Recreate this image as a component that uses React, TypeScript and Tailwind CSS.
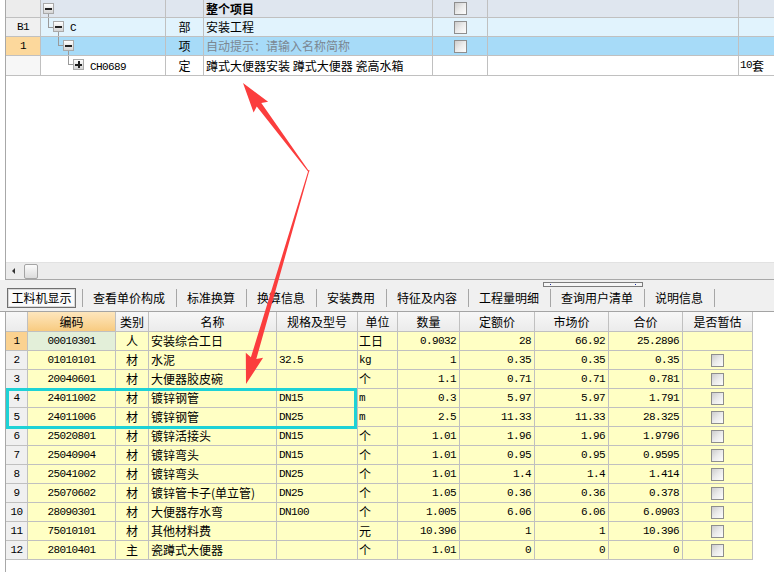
import React from "react";

const mono = "font-['Liberation_Mono','Noto_Sans_CJK_SC',monospace] text-[11px] tracking-[-0.6px]";
const cjk = "font-['Noto_Sans_CJK_SC',sans-serif] text-[12px]";
const cell = "border-r border-b border-[#c0c0c0] flex items-center overflow-hidden whitespace-nowrap";

function Check() {
  return (
    <span className="block w-[13px] h-[13px] border border-[#8e8e8e] bg-linear-to-br from-[#cdcdcd] via-[#ebebeb] to-[#fdfdfd]" />
  );
}

function Toggle({ plus }: { plus?: boolean }) {
  return (
    <span className="relative block w-[11px] h-[11px] border border-[#a9a9a9] bg-linear-to-b from-white to-[#d4d4d4]">
      <span className="absolute left-[1px] top-[3.5px] w-[7px] h-[2px] bg-[#222]" />
      {plus && <span className="absolute left-[3.5px] top-[1px] w-[2px] h-[7px] bg-[#222]" />}
    </span>
  );
}

type Row = {
  code: string;
  kind: string;
  name: string;
  spec: string;
  unit: string;
  qty: string;
  quota: string;
  market: string;
  total: string;
  check: boolean;
};

const rows: Row[] = [
  { code: "00010301", kind: "人", name: "安装综合工日", spec: "", unit: "工日", qty: "0.9032", quota: "28", market: "66.92", total: "25.2896", check: false },
  { code: "01010101", kind: "材", name: "水泥", spec: "32.5", unit: "kg", qty: "1", quota: "0.35", market: "0.35", total: "0.35", check: true },
  { code: "20040601", kind: "材", name: "大便器胶皮碗", spec: "", unit: "个", qty: "1.1", quota: "0.71", market: "0.71", total: "0.781", check: true },
  { code: "24011002", kind: "材", name: "镀锌钢管", spec: "DN15", unit: "m", qty: "0.3", quota: "5.97", market: "5.97", total: "1.791", check: true },
  { code: "24011006", kind: "材", name: "镀锌钢管", spec: "DN25", unit: "m", qty: "2.5", quota: "11.33", market: "11.33", total: "28.325", check: true },
  { code: "25020801", kind: "材", name: "镀锌活接头", spec: "DN15", unit: "个", qty: "1.01", quota: "1.96", market: "1.96", total: "1.9796", check: true },
  { code: "25040904", kind: "材", name: "镀锌弯头", spec: "DN15", unit: "个", qty: "1.01", quota: "0.95", market: "0.95", total: "0.9595", check: true },
  { code: "25041002", kind: "材", name: "镀锌弯头", spec: "DN25", unit: "个", qty: "1.01", quota: "1.4", market: "1.4", total: "1.414", check: true },
  { code: "25070602", kind: "材", name: "镀锌管卡子(单立管)", spec: "DN25", unit: "个", qty: "1.05", quota: "0.36", market: "0.36", total: "0.378", check: true },
  { code: "28090301", kind: "材", name: "大便器存水弯", spec: "DN100", unit: "个", qty: "1.005", quota: "6.06", market: "6.06", total: "6.0903", check: true },
  { code: "75010101", kind: "材", name: "其他材料费", spec: "", unit: "元", qty: "10.396", quota: "1", market: "1", total: "10.396", check: true },
  { code: "28010401", kind: "主", name: "瓷蹲式大便器", spec: "", unit: "个", qty: "1.01", quota: "0", market: "0", total: "0", check: true },
];

const tabs = ["查看单价构成", "标准换算", "换算信息", "安装费用", "特征及内容", "工程量明细", "查询用户清单", "说明信息"];
const headers = ["", "编码", "类别", "名称", "规格及型号", "单位", "数量", "定额价", "市场价", "合价", "是否暂估"];

function arrowPoints(sx: number, sy: number, tx: number, ty: number) {
  const dx = tx - sx;
  const dy = ty - sy;
  const len = Math.hypot(dx, dy);
  const ux = dx / len;
  const uy = dy / len;
  const nx = -uy;
  const ny = ux;
  const L = 27;
  const H = 9;
  const w0 = 0.5;
  const w1 = 2.8;
  const bx = tx - ux * L;
  const by = ty - uy * L;
  const pts = [
    [sx + nx * w0, sy + ny * w0],
    [bx + nx * w1, by + ny * w1],
    [bx + nx * H - ux * 3, by + ny * H - uy * 3],
    [tx, ty],
    [bx - nx * H - ux * 3, by - ny * H - uy * 3],
    [bx - nx * w1, by - ny * w1],
    [sx - nx * w0, sy - ny * w0],
  ];
  return pts.map((p) => p.map((v) => v.toFixed(1)).join(",")).join(" ");
}

export default function App() {
  return (
    <div className={`relative w-[774px] h-[572px] overflow-hidden bg-white text-black ${cjk}`}>
      {/* upper tree grid */}
      <div className="ml-[5px] h-[280px] flex flex-col border-l border-b border-l-[#a8a8a8] border-b-[#a8a8a8]">
        <div className="grid grid-cols-[35px_125px_38px_229px_55px_251px_1fr]">
          {/* row 0 */}
          <div className={`${cell} h-[18px] bg-[#ececec]`} />
          <div className={`${cell} h-[18px] bg-[#dfe6ef] relative`}>
            <span className="absolute left-[2px] top-[3px]"><Toggle /></span>
            <span className="absolute left-[7px] top-[14px] w-[1px] h-[4px] bg-[#9a9a9a]" />
          </div>
          <div className={`${cell} h-[18px] bg-[#dfe6ef]`} />
          <div className={`${cell} h-[18px] bg-[#dfe6ef] pl-[2px] font-bold`}>整个项目</div>
          <div className={`${cell} h-[18px] bg-[#dfe6ef] justify-center`}><Check /></div>
          <div className={`${cell} h-[18px] bg-[#dfe6ef]`} />
          <div className={`${cell} h-[18px] bg-[#dfe6ef] border-r-0`} />

          {/* row B1 */}
          <div className={`${cell} h-[19px] bg-[#f0f0f0] justify-center ${mono}`}>B1</div>
          <div className={`${cell} h-[19px] bg-[#e1f3fd] relative`}>
            <span className="absolute left-[7px] top-0 w-[1px] h-[9px] bg-[#9a9a9a]" />
            <span className="absolute left-[7px] top-[9px] w-[5px] h-[1px] bg-[#9a9a9a]" />
            <span className="absolute left-[12px] top-[3px]"><Toggle /></span>
            <span className="absolute left-[17px] top-[14px] w-[1px] h-[5px] bg-[#9a9a9a]" />
            <span className={`absolute left-[29px] top-[2px] ${mono}`}>C</span>
          </div>
          <div className={`${cell} h-[19px] bg-[#e1f3fd] justify-center`}>部</div>
          <div className={`${cell} h-[19px] bg-[#e1f3fd] pl-[2px]`}>安装工程</div>
          <div className={`${cell} h-[19px] bg-[#e1f3fd] justify-center`}><Check /></div>
          <div className={`${cell} h-[19px] bg-[#e1f3fd]`} />
          <div className={`${cell} h-[19px] bg-[#e1f3fd] border-r-0`} />

          {/* row 1 */}
          <div className={`${cell} h-[19px] bg-[#fcd89c] justify-center ${mono}`}>1</div>
          <div className={`${cell} h-[19px] bg-[#a7dbf8] relative`}>
            <span className="absolute left-[17px] top-0 w-[1px] h-[8px] bg-[#9a9a9a]" />
            <span className="absolute left-[17px] top-[8px] w-[5px] h-[1px] bg-[#9a9a9a]" />
            <span className="absolute left-[22px] top-[3px]"><Toggle /></span>
            <span className="absolute left-[27px] top-[14px] w-[1px] h-[5px] bg-[#9a9a9a]" />
          </div>
          <div className={`${cell} h-[19px] bg-[#a7dbf8] justify-center`}>项</div>
          <div className={`${cell} h-[19px] bg-[#a7dbf8] pl-[2px] text-[#7b8792]`}>自动提示：请输入名称简称</div>
          <div className={`${cell} h-[19px] bg-[#a7dbf8] justify-center`}><Check /></div>
          <div className={`${cell} h-[19px] bg-[#a7dbf8]`} />
          <div className={`${cell} h-[19px] bg-[#a7dbf8] border-r-0`} />

          {/* row CH0689 */}
          <div className={`${cell} h-[20px] bg-[#f7f7f7]`} />
          <div className={`${cell} h-[20px] bg-white relative`}>
            <span className="absolute left-[27px] top-0 w-[1px] h-[8px] bg-[#9a9a9a]" />
            <span className="absolute left-[27px] top-[8px] w-[5px] h-[1px] bg-[#9a9a9a]" />
            <span className="absolute left-[32px] top-[3px]"><Toggle plus /></span>
            <span className={`absolute left-[49px] top-[3px] ${mono}`}>CH0689</span>
          </div>
          <div className={`${cell} h-[20px] justify-center`}>定</div>
          <div className={`${cell} h-[20px] pl-[2px]`}>蹲式大便器安装 蹲式大便器 瓷高水箱</div>
          <div className={`${cell} h-[20px]`} />
          <div className={`${cell} h-[20px]`} />
          <div className={`${cell} h-[20px] border-r-0 pl-[1px]`}>
            <span className={mono}>10</span>套
          </div>
        </div>

        <div className="flex-1 bg-white" />

        {/* scrollbar */}
        <div className="h-[17px] bg-[#ececec] border-t border-[#e2e2e2] flex items-center">
          <span className="ml-[6px] w-0 h-0 border-y-[3px] border-y-transparent border-r-[3px] border-r-[#333]" />
          <span className="ml-[9px] w-[14px] h-[15px] rounded-[2px] border border-[#a4a4a4] bg-linear-to-b from-[#fbfbfb] to-[#dcdcdc]" />
        </div>
      </div>

      {/* tab strip */}
      <div className="relative h-[31px] bg-[#f0f0f0]">
        <div className="absolute left-[543px] top-[2px] w-[100px] h-[5px] border border-[#7c7c7c] bg-[#f6f6f6]">
          <span className="absolute left-[6px] top-[1px] w-[1px] h-[1px] bg-[#2030a0]" />
          <span className="absolute left-[91px] top-[1px] w-[1px] h-[1px] bg-[#2030a0]" />
        </div>
        <div className="flex items-center pt-[8px]">
          <div className="ml-[7px] w-[69px] h-[20px] border border-[#707070] bg-[#fbfbfb] flex items-center justify-center outline outline-1 -outline-offset-2 outline-[#d8d8d8]">
            工料机显示
          </div>
          <span className="ml-[6px] w-[1px] h-[18px] bg-[#a6a6a6]" />
          {tabs.map((t) => (
            <React.Fragment key={t}>
              <span className="pl-[10px] pr-[11px] leading-[20px]">{t}</span>
              <span className="w-[1px] h-[18px] bg-[#a6a6a6]" />
            </React.Fragment>
          ))}
        </div>
      </div>

      {/* lower material grid */}
      <div className="h-[261px] border-t border-[#a4a4a4]">
        <div className="ml-[5px] h-full border-l border-[#a8a8a8]">
          <div className="grid grid-cols-[22px_88px_33px_128px_81px_40px_62px_75px_74px_74px_70px] w-[747px]">
            {headers.map((h, i) => (
              <div
                key={i}
                className={`${cell} h-[20px] justify-center ${
                  i === 1 ? "bg-linear-to-b from-[#fde6bd] to-[#f8cb80]" : "bg-linear-to-b from-[#f7f7f7] to-[#ebebeb]"
                }`}
              >
                {h}
              </div>
            ))}
            {rows.map((r, idx) => (
              <React.Fragment key={idx}>
                <div className={`${cell} h-[19px] justify-center ${mono} ${idx === 0 ? "bg-[#fbd290]" : "bg-[#f0f0f0]"}`}>
                  {idx + 1}
                </div>
                <div className={`${cell} h-[19px] justify-center ${mono} ${idx === 0 ? "bg-[#e3efd9]" : "bg-[#ffffc4]"}`}>
                  {r.code}
                </div>
                <div className={`${cell} h-[19px] justify-center bg-[#ffffc4]`}>{r.kind}</div>
                <div className={`${cell} h-[19px] pl-[2px] bg-[#ffffc4]`}>{r.name}</div>
                <div className={`${cell} h-[19px] pl-[2px] bg-[#ffffc4] ${mono}`}>{r.spec}</div>
                <div className={`${cell} h-[19px] pl-[1px] bg-[#ffffc4] ${/^[a-z]+$/.test(r.unit) ? mono : ""}`}>{r.unit}</div>
                <div className={`${cell} h-[19px] justify-end pr-[3px] bg-[#ffffc4] ${mono}`}>{r.qty}</div>
                <div className={`${cell} h-[19px] justify-end pr-[3px] bg-[#ffffc4] ${mono}`}>{r.quota}</div>
                <div className={`${cell} h-[19px] justify-end pr-[3px] bg-[#ffffc4] ${mono}`}>{r.market}</div>
                <div className={`${cell} h-[19px] justify-end pr-[3px] bg-[#ffffc4] ${mono}`}>{r.total}</div>
                <div className={`${cell} h-[19px] justify-center bg-[#ffffc4]`}>{r.check && <Check />}</div>
              </React.Fragment>
            ))}
          </div>
        </div>
      </div>

      {/* annotation: highlight box */}
      <div className="absolute left-[6px] top-[388px] w-[351px] h-[41px] border-[3px] border-[#1ed2d6] pointer-events-none" />

      {/* annotation: arrows */}
      <svg className="absolute left-0 top-0 pointer-events-none" width="774" height="572" viewBox="0 0 774 572">
        <polygon points={arrowPoints(309, 172, 243, 83)} fill="#fb3d3d" />
        <polygon points={arrowPoints(309, 170, 246, 384)} fill="#fb3d3d" />
      </svg>
    </div>
  );
}
